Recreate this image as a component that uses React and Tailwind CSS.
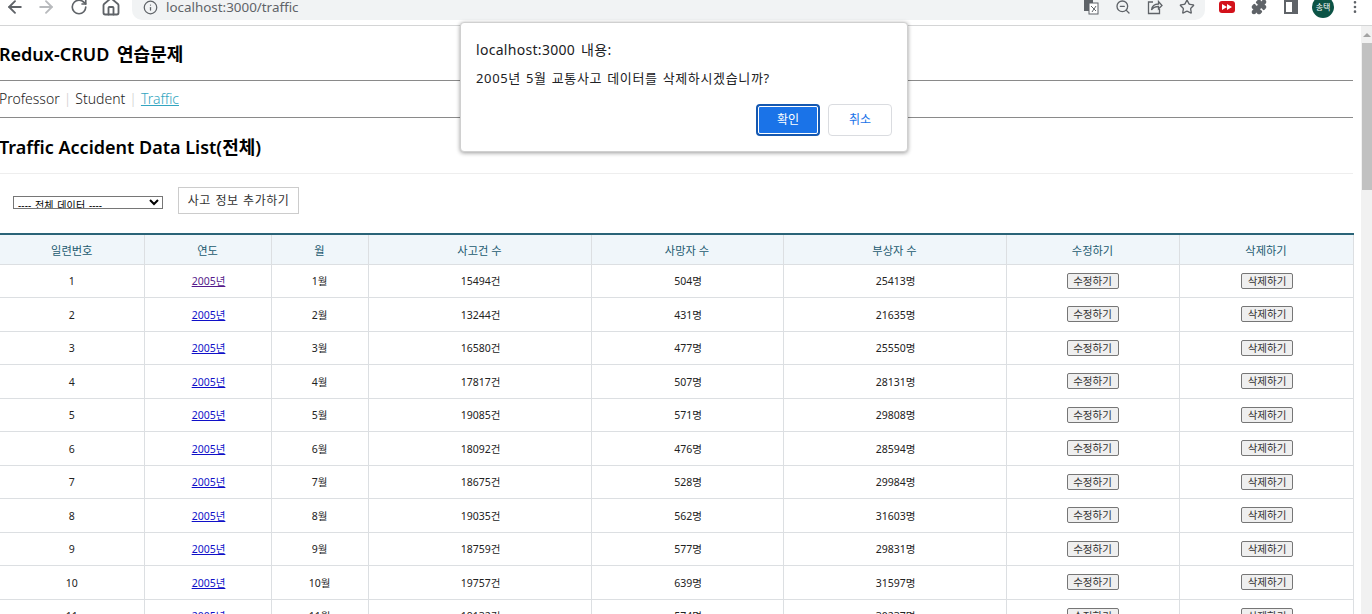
import { ArrowLeft, ArrowRight, RotateCw, Home, Info, Star, ZoomOut, Puzzle, MoreVertical } from "lucide-react";

const rows = [
  [1, "1월", "15494건", "504명", "25413명"],
  [2, "2월", "13244건", "431명", "21635명"],
  [3, "3월", "16580건", "477명", "25550명"],
  [4, "4월", "17817건", "507명", "28131명"],
  [5, "5월", "19085건", "571명", "29808명"],
  [6, "6월", "18092건", "476명", "28594명"],
  [7, "7월", "18675건", "528명", "29984명"],
  [8, "8월", "19035건", "562명", "31603명"],
  [9, "9월", "18759건", "577명", "29831명"],
  [10, "10월", "19757건", "639명", "31597명"],
  [11, "11월", "19132건", "574명", "30237명"],
];

const headers = ["일련번호", "연도", "월", "사고건 수", "사망자 수", "부상자 수", "수정하기", "삭제하기"];
const widths = ["w-[144px]", "w-[127px]", "w-[97px]", "w-[223px]", "w-[192px]", "w-[223px]", "w-[173px]", "w-[174px]"];

function BrowserBar() {
  return (
    <div className="h-[26px] flex items-start border-b border-[#d4d5d6] bg-white pl-[5px] overflow-hidden">
      <div className="h-[14px] flex items-center text-[#5f6368]">
        <ArrowLeft size={20} strokeWidth={2.2} className="mr-[11px]" />
        <ArrowRight size={20} strokeWidth={2.2} className="text-[#b8babd] mr-[14px]" />
        <RotateCw size={18} strokeWidth={2.2} className="mr-[13px]" />
        <Home size={20} strokeWidth={2.2} className="mr-[11px]" />
      </div>
      <div className="w-[1073px] h-[20px] rounded-b-[10px] bg-[#f1f3f4] pl-[11px]">
        <div className="h-[14px] flex items-center">
          <Info size={15} className="text-[#5f6368] mr-[8px]" />
          <span className="text-[13.4px] leading-[14px] text-[#5f6368]">localhost:3000/traffic</span>
          <div className="ml-auto flex items-center gap-[16px] pr-[10px] text-[#5f6368]">
            <svg width="16" height="16" viewBox="0 0 16 16">
              <rect x="1" y="1" width="9" height="11" fill="#5f6368" />
              <rect x="6" y="4" width="9" height="11" fill="#fff" stroke="#5f6368" />
              <path d="M8 7l5 5M13 7l-4 6" stroke="#5f6368" fill="none" />
            </svg>
            <ZoomOut size={16} />
            <svg width="16" height="16" viewBox="0 0 16 16" fill="none" stroke="#5f6368" strokeWidth="1.3">
              <path d="M6 3H1.5v11.5h11V10" />
              <path d="M4.5 11c.5-4 3.5-6 7-6V2.5L15 6.5l-3.5 3.5V7.5c-3 0-5.500 1-7 3.500z" />
            </svg>
            <Star size={16} />
          </div>
        </div>
      </div>
      <div className="h-[14px] flex items-center">
        <div className="w-[16px] h-[12px] ml-[14px] rounded-[3px] bg-[#d3121b] flex items-center justify-center">
          <svg width="10" height="6" viewBox="0 0 10 6"><path d="M0 0l5 3-5 3zM5 0l5 3-5 3z" fill="#fff" /></svg>
        </div>
        <Puzzle size={16} fill="#5f6368" className="text-[#5f6368] ml-[16px]" />
        <div className="w-[14px] h-[14px] ml-[17px] border-2 border-[#5f6368] border-r-[6px]" />
        <div className="w-[22px] h-[22px] shrink-0 ml-[14px] rounded-full bg-[#0b5345] text-white text-[8px] leading-[10px] flex items-center justify-center">송택</div>
        <MoreVertical size={16} className="text-[#5f6368] ml-[13px]" />
      </div>
    </div>
  );
}

function Table() {
  const cell = "border-r border-b border-[#dcdfe2] pt-[2px]";
  const shifted = "border-r border-b border-[#dcdfe2] pt-[2px] pl-[2px]";
  return (
    <table className="w-[1353px] table-fixed border-collapse border-t-2 border-t-[#2a6478] text-[10.5px] text-center">
      <thead>
        <tr className="h-[30.4px] bg-[#f0f6fa] text-[#235a70] text-[11.25px]">
          {headers.map((h, i) => (
            <th key={h} className={`${widths[i]} font-normal pt-[3px] border border-[#dcdfe2] border-t-0 border-l-0 last:border-r`}>{h}</th>
          ))}
        </tr>
      </thead>
      <tbody className="text-[#222]">
        {rows.map((r) => (
          <tr key={r[0]} className="h-[33.5px]">
            <td className={cell}>{r[0]}</td>
            <td className={shifted}>
              <a href="#" className={r[0] === 1 ? "underline text-[#551a8b]" : "underline text-[#1010c8]"}>2005년</a>
            </td>
            <td className={cell}>{r[1]}</td>
            <td className={shifted}>{r[2]}</td>
            <td className={shifted}>{r[3]}</td>
            <td className={shifted}>{r[4]}</td>
            <td className="border-r border-b border-[#dcdfe2]">
              <button className="w-[52px] h-[16px] leading-[14px] border border-[#767676] rounded-[2px] bg-[#efefef] text-[#333] text-[10.5px]">수정하기</button>
            </td>
            <td className="border-r border-b border-[#dcdfe2] pl-[2px]">
              <button className="w-[52px] h-[16px] leading-[14px] border border-[#767676] rounded-[2px] bg-[#efefef] text-[#333] text-[10.5px]">삭제하기</button>
            </td>
          </tr>
        ))}
      </tbody>
    </table>
  );
}

function AlertBox() {
  return (
    <div className="absolute left-[460px] top-[22px] w-[448px] h-[130px] bg-white rounded-[4px] border border-[#d0d0d0] shadow-[0_1px_4px_rgba(0,0,0,0.4)] px-[15px] pt-[17px] text-[#202124]">
      <div className="text-[14px] leading-[20px] tracking-[0.3px] [word-spacing:2px]">localhost:3000 내용:</div>
      <div className="text-[13px] leading-[18px] mt-[9px] tracking-[0.65px] [word-spacing:1px]">2005년 5월 교통사고 데이터를 삭제하시겠습니까?</div>
      <div className="flex justify-end gap-[8px] mt-[17px]">
        <button className="w-[64px] h-[32px] rounded-[4px] bg-[#1a73e8] border-2 border-[#1558b0] outline outline-1 -outline-offset-[3px] outline-white text-white text-[12px]">확인</button>
        <button className="w-[64px] h-[32px] rounded-[4px] bg-white border border-[#dadce0] text-[#1a73e8] text-[12px]">취소</button>
      </div>
    </div>
  );
}

export default function App() {
  return (
    <div className="relative w-[1372px] h-[614px] overflow-hidden bg-white font-['Noto_Sans','Noto_Sans_CJK_KR',sans-serif] text-black">
      <BrowserBar />
      <div className="flex">
        <div className="w-[1361px]">
          <h1 className="w-[1353px] h-[55px] pt-[15px] text-[18px] leading-[26px] font-semibold border-b border-[#8a8a8a] [word-spacing:3px] -indent-[1px]">Redux-CRUD 연습문제</h1>
          <nav className="w-[1353px] h-[37px] pb-[2px] flex items-center text-[14px] font-light text-[#222] border-b border-[#8a8a8a]">
            <a href="#" className="-ml-[1px]">Professor</a>
            <span className="mx-[4px] text-[#ccc]">|</span>
            <a href="#">Student</a>
            <span className="mx-[4px] text-[#ccc]">|</span>
            <a href="#" className="underline text-[#33a5c0]">Traffic</a>
          </nav>
          <h2 className="w-[1353px] h-[56px] pt-[17px] text-[18px] leading-[24px] font-semibold border-b border-[#eeeeee] -indent-[1px]">Traffic Accident Data List(전체)</h2>
          <div className="h-[59px] flex items-start pl-[13px] pt-[13px]">
            <select className="w-[150px] h-[13px] mt-[9px] border border-[#767676] text-[10px] leading-[11px] bg-white [word-spacing:1px] tracking-[0.1px]">
              <option>---- 전체 데이터 ----</option>
            </select>
            <button className="ml-[15px] w-[121px] h-[27px] border border-[#ccc] text-[12px] tracking-[0.5px] [word-spacing:1px] text-[#333]">사고 정보 추가하기</button>
          </div>
          <Table />
        </div>
        <div className="w-[11px] h-[588px] bg-[#f1f1f1] flex flex-col">
          <div className="h-[17px] flex items-center justify-center">
            <div className="w-0 h-0 border-x-[4px] border-x-transparent border-b-[4px] border-b-[#a3a3a3]" />
          </div>
          <div className="h-[147px] ml-[1px] bg-[#c1c1c1]" />
        </div>
      </div>
      <AlertBox />
    </div>
  );
}
